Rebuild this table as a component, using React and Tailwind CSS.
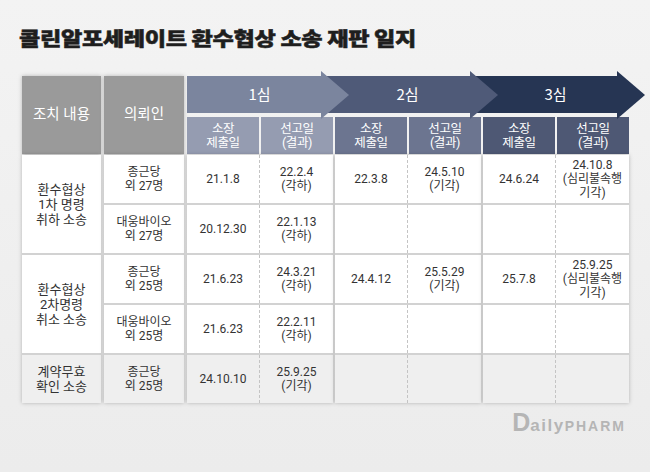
const stages = [
  { label: '1심', band: 'bg-[#7b859e]', fill: '#7b859e', sub: 'bg-[#959cb1]', seg: 'w-[134px] pl-[11px]', tip: 'left-[134px]' },
  { label: '2심', band: 'bg-[#4f5a78]', fill: '#4f5a78', sub: 'bg-[#6c7590]', seg: 'w-[149px] pl-[24px]', tip: 'left-[283px]' },
  { label: '3심', band: 'bg-[#263553]', fill: '#263553', sub: 'bg-[#4e5874]', seg: 'w-[147px] pl-[24px]', tip: 'left-[430px]' },
];

const groups = [
  { lines: ['환수협상', '1차 명령', '취하 소송'], cls: 'h-[100px] border-b-2 border-[#d2d2d2] bg-white' },
  { lines: ['환수협상', '2차명령', '취소 소송'], cls: 'h-[100px] border-b-2 border-[#d2d2d2] bg-white' },
  { lines: ['계약무효', '확인 소송'], cls: 'h-[48px] bg-[#efefef]' },
];

const rows = [
  { client: ['종근당', '외 27명'], cells: [['21.1.8'], ['22.2.4', '(각하)'], ['22.3.8'], ['24.5.10', '(기각)'], ['24.6.24'], ['24.10.8', '(심리불속행', '기각)']] },
  { client: ['대웅바이오', '외 27명'], cells: [['20.12.30'], ['22.1.13', '(각하)'], [], [], [], []] },
  { client: ['종근당', '외 25명'], cells: [['21.6.23'], ['24.3.21', '(각하)'], ['24.4.12'], ['25.5.29', '(기각)'], ['25.7.8'], ['25.9.25', '(심리불속행', '기각)']] },
  { client: ['대웅바이오', '외 25명'], cells: [['21.6.23'], ['22.2.11', '(각하)'], [], [], [], []] },
  { client: ['종근당', '외 25명'], cells: [['24.10.10'], ['25.9.25', '(기각)'], [], [], [], []], last: true },
];

const colShadow = 'shadow-[0_0_4px_rgba(0,0,0,0.25)]';

function Lines({ lines }) {
  return (
    <div>
      {lines.map((l, i) => <div key={i}>{l}</div>)}
    </div>
  );
}

function rowCls(r) {
  return r.last ? 'h-[48px] bg-[#efefef]' : 'h-[50px] border-b-2 border-[#d2d2d2] bg-white';
}

export default function App() {
  return (
    <div className="w-[650px] h-[472px] bg-[#efefef] bg-gradient-to-b from-[#f3f3f3] to-[#ececec] font-['Roboto','Noto_Sans_CJK_KR',sans-serif] text-[#333]">
      <div className="pt-[24px] pl-[19px] h-[52px]">
        <h1 className="inline-block origin-left scale-x-[1.22] text-[19px] leading-[28px] font-black tracking-[-0.3px] text-[#1e1e1e] font-['Noto_Sans_CJK_KR',sans-serif] [-webkit-text-stroke:0.5px_#1e1e1e]">
          콜린알포세레이트 환수협상 소송 재판 일지
        </h1>
      </div>

      <div className="mt-[24px] ml-[22px]">
        {/* header */}
        <div className="flex h-[78px]">
          <div className={`w-[79px] bg-[#9a9a9a] text-white text-[14.5px] flex items-center justify-center ${colShadow}`}>조치 내용</div>
          <div className={`w-[80px] ml-[3px] bg-[#9a9a9a] text-white text-[14.5px] flex items-center justify-center ${colShadow}`}>의뢰인</div>
          <div className="ml-[3px] w-[442px] flex flex-col">
            <div className="relative flex h-[37px]">
              {stages.map((s) => (
                <div key={s.label} className={`${s.seg} ${s.band} flex items-center justify-center text-white text-[15px]`}>
                  <span className="font-['Noto_Sans_CJK_KR',sans-serif]">{s.label}</span>
                </div>
              ))}
              {stages.map((s) => (
                <svg key={s.label} className={`absolute top-[-5px] ${s.tip} z-10`} width="28" height="48" viewBox="0 0 28 48">
                  <polygon points="0,0 28,24 0,48" fill={s.fill} />
                </svg>
              ))}
            </div>
            <div className="mt-[4px] flex gap-[2px] h-[37px]">
              {stages.map((s) => (
                <div key={s.label} className="flex gap-[2px] w-[146px]">
                  <div className={`w-[72px] ${s.sub} text-white text-[12.5px] leading-[14px] flex items-center justify-center text-center tracking-[-0.4px]`}>
                    <Lines lines={['소장', '제출일']} />
                  </div>
                  <div className={`w-[72px] ${s.sub} text-white text-[12.5px] leading-[14px] flex items-center justify-center text-center tracking-[-0.4px]`}>
                    <Lines lines={['선고일', '(결과)']} />
                  </div>
                </div>
              ))}
            </div>
          </div>
        </div>

        {/* body */}
        <div className="mt-px flex text-[12px] leading-[14px]">
          <div className={`w-[79px] flex flex-col ${colShadow}`}>
            {groups.map((g, i) => (
              <div key={i} className={`${g.cls} flex items-center justify-center text-center text-[13px] leading-[15px] text-[#333]`}>
                <Lines lines={g.lines} />
              </div>
            ))}
          </div>
          <div className={`w-[80px] ml-[3px] flex flex-col ${colShadow}`}>
            {rows.map((r, i) => (
              <div key={i} className={`${rowCls(r)} flex items-center justify-center text-center`}>
                <Lines lines={r.client} />
              </div>
            ))}
          </div>
          <div className="ml-[3px] flex gap-[2px]">
            {stages.map((s, si) => (
              <div key={s.label} className={`w-[146px] flex flex-col ${colShadow}`}>
                {rows.map((r, ri) => (
                  <div key={ri} className={`${rowCls(r)} flex`}>
                    <div className="w-1/2 border-r border-dashed border-[#c4c4c4] flex items-center justify-center text-center">
                      <Lines lines={r.cells[si * 2]} />
                    </div>
                    <div className="w-1/2 flex items-center justify-center text-center">
                      <Lines lines={r.cells[si * 2 + 1]} />
                    </div>
                  </div>
                ))}
              </div>
            ))}
          </div>
        </div>
      </div>

      {/* logo */}
      <div className="mt-[7px] pr-[24px] flex justify-end">
        <div className="flex items-baseline text-[#b5b5b5] font-bold font-['Liberation_Sans',sans-serif] leading-none">
          <span className="text-[25px] font-black">D</span>
          <span className="text-[17px] tracking-[1.5px]">aily</span>
          <span className="text-[14px] tracking-[2px]">PHARM</span>
        </div>
      </div>
    </div>
  );
}
